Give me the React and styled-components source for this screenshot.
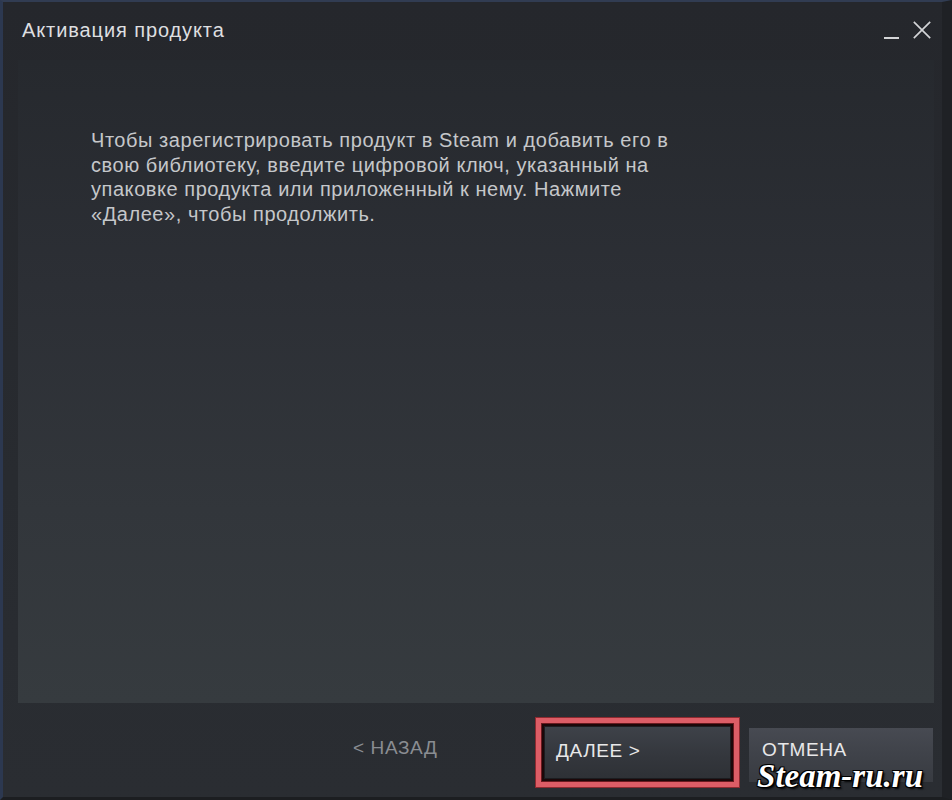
import React from "react";
import styled, { createGlobalStyle } from "styled-components";

const Global = createGlobalStyle`
  html, body { margin: 0; padding: 0; background: #1c1e22; }
  body { font-family: "Liberation Sans", Arial, sans-serif; }
  * { box-sizing: border-box; }
`;

const Window = styled.div`
  position: relative;
  width: 952px;
  height: 800px;
  display: flex;
  flex-direction: column;
  background: linear-gradient(180deg, #25272c 0%, #282b30 60%, #2a2d32 100%);
  border-left: 3px solid #2c3850;
  border-top: 2px solid #313c52;
  border-right: 10px solid #1f2125;
  border-bottom: 3px solid #1c1e21;
  overflow: hidden;
`;

const TitleBar = styled.div`
  height: 58px;
  display: flex;
  align-items: flex-start;
  justify-content: space-between;
  padding: 16px 10px 0 19px;
  flex-shrink: 0;
`;

const Title = styled.h1`
  margin: 0;
  font-family: "Liberation Sans", Arial, sans-serif;
  font-weight: 400;
  font-size: 20px;
  line-height: 24px;
  color: #dedfe0;
  letter-spacing: 0.9px;
`;

const Controls = styled.div`
  display: flex;
  align-items: flex-start;
  gap: 10px;
  padding-top: 2px;
`;

const CtrlButton = styled.button`
  width: 20px;
  height: 20px;
  padding: 0;
  border: 0;
  background: transparent;
  display: flex;
  align-items: center;
  justify-content: center;
  cursor: pointer;
`;

const Panel = styled.div`
  flex: 1;
  margin: 0 0 0 15px;
  width: 916px;
  background: linear-gradient(180deg, #26292e 0%, #2c2f35 35%, #32363b 70%, #363b3f 100%);
  padding: 68px 0 0 73px;
`;

const Body = styled.p`
  margin: 0;
  font-family: "Liberation Sans", Arial, sans-serif;
  font-size: 20px;
  line-height: 24.5px;
  color: #c5c7ca;
  letter-spacing: 0.55px;
`;

const Footer = styled.div`
  height: 94px;
  flex-shrink: 0;
  display: flex;
  align-items: flex-start;
  justify-content: flex-end;
  padding: 15px 9px 0 0;
  gap: 10px;
`;

const Button = styled.button`
  width: ${(p) => p.$w || 186}px;
  height: ${(p) => p.$h || 53}px;
  margin-top: ${(p) => p.$top || 0}px;
  padding: 0 0 ${(p) => p.$lift || 4}px ${(p) => p.$pad || 12}px;
  text-align: left;
  font-family: "Liberation Sans", Arial, sans-serif;
  font-size: 19px;
  line-height: 22px;
  letter-spacing: 0.6px;
  color: ${(p) => (p.$variant === "disabled" ? "#8a8d92" : "#e8e8e9")};
  border: ${(p) => (p.$variant === "primary" ? "1px solid #1b1d20" : "0")};
  background: ${(p) =>
    p.$variant === "disabled"
      ? "transparent"
      : p.$variant === "primary"
      ? "linear-gradient(180deg, #3e4249 0%, #34373d 55%, #2e3136 100%)"
      : "linear-gradient(180deg, #474a52 0%, #3f4249 50%, #383b41 100%)"};
  cursor: pointer;
`;

const Highlight = styled.div`
  padding: 3px;
  border: 5px solid #dd5d66;
  background: #1d0709;
  box-shadow: 0 0 0 1px #8e2a30, inset 0 0 0 1px #6a1a1f;
  display: flex;
`;

const Watermark = styled.div`
  position: absolute;
  right: 19px;
  bottom: 8px;
  font-family: "Liberation Serif", "Times New Roman", serif;
  font-style: italic;
  font-weight: 700;
  font-size: 33px;
  line-height: 0.8;
  color: #ffffff;
  text-shadow: 1px 1px 0 #000, -1px 1px 0 #000, 1px -1px 0 #000, -1px -1px 0 #000, 2px 2px 2px #000;
  pointer-events: none;
`;

export default function App() {
  return (
    <>
      <Global />
      <Window>
        <TitleBar>
          <Title>Активация продукта</Title>
          <Controls>
            <CtrlButton aria-label="Свернуть">
              <svg width="18" height="20" viewBox="0 0 18 20">
                <line x1="1" y1="18" x2="16" y2="18" stroke="#d4d5d7" strokeWidth="2" />
              </svg>
            </CtrlButton>
            <CtrlButton aria-label="Закрыть">
              <svg width="22" height="20" viewBox="0 0 22 20">
                <path d="M2 1 L20 19 M20 1 L2 19" stroke="#d4d5d7" strokeWidth="1.8" fill="none" />
              </svg>
            </CtrlButton>
          </Controls>
        </TitleBar>
        <Panel>
          <Body>
            Чтобы зарегистрировать продукт в Steam и добавить его в
            <br />
            свою библиотеку, введите цифровой ключ, указанный на
            <br />
            упаковке продукта или приложенный к нему. Нажмите
            <br />
            «Далее», чтобы продолжить.
          </Body>
        </Panel>
        <Footer>
          <Button $variant="disabled" $top={10} $pad={13} $w={186} $h={45} $lift={6}>
            &lt; НАЗАД
          </Button>
          <Highlight>
            <Button $variant="primary" $w={187} $pad={11}>
              ДАЛЕЕ &gt;
            </Button>
          </Highlight>
          <Button $variant="secondary" $top={10} $w={184} $h={54} $pad={13} $lift={10}>
            ОТМЕНА
          </Button>
        </Footer>
        <Watermark>Steam-ru.ru</Watermark>
      </Window>
    </>
  );
}
